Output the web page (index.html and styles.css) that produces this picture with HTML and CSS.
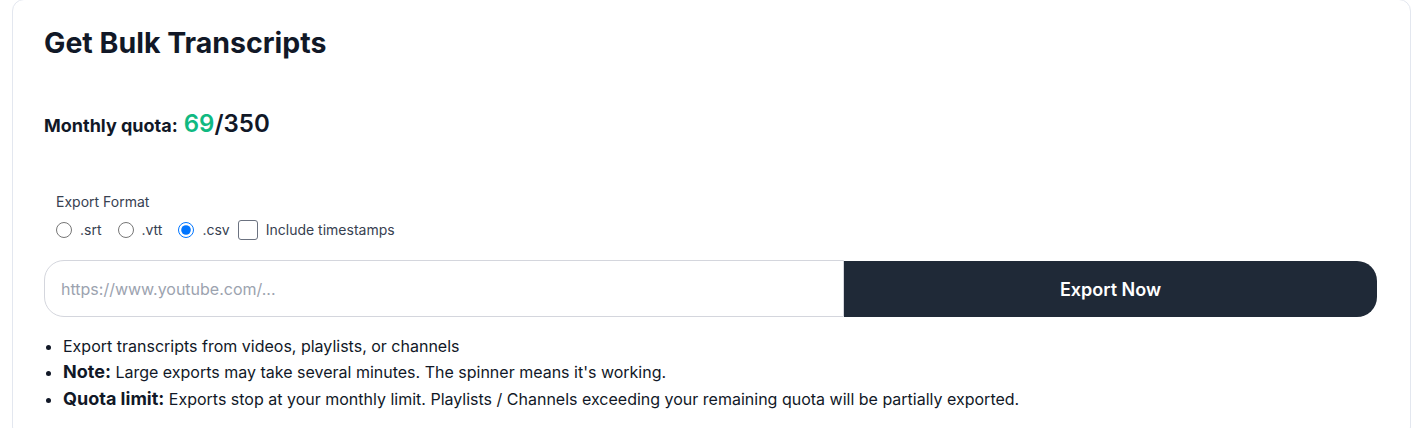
FILE: index.html
```html
<!DOCTYPE html>
<html lang="en">
<head>
<meta charset="utf-8">
<title>Get Bulk Transcripts</title>
<link rel="stylesheet" href="styles.css">
</head>
<body>
<div class="page">
  <section class="card">
    <h2 class="title">Get Bulk Transcripts</h2>
    <div class="quota">
      <span class="quota-label">Monthly quota:</span>
      <span class="quota-value"><span class="used">69</span>/350</span>
    </div>
    <div class="format">
      <div class="format-label">Export Format</div>
      <div class="format-options">
        <label class="opt"><input type="radio" name="fmt" class="radio"><span>.srt</span></label>
        <label class="opt"><input type="radio" name="fmt" class="radio"><span>.vtt</span></label>
        <label class="opt last"><input type="radio" name="fmt" class="radio" checked><span>.csv</span></label>
        <label class="opt"><span class="checkbox"></span><span>Include timestamps</span></label>
      </div>
    </div>
    <div class="export-row">
      <input class="url" type="text" placeholder="https://www.youtube.com/...">
      <button class="export-btn" type="button">Export Now</button>
    </div>
    <ul class="notes">
      <li>Export transcripts from videos, playlists, or channels</li>
      <li><strong>Note:</strong> Large exports may take several minutes. The spinner means it's working.</li>
      <li><strong>Quota limit:</strong> Exports stop at your monthly limit. Playlists / Channels exceeding your remaining quota will be partially exported.</li>
    </ul>
  </section>
</div>
</body>
</html>
```

FILE: styles.css
```css
* { box-sizing: border-box; }
html, body {
  margin: 0;
  padding: 0;
  background: #ffffff;
  font-family: Inter, "Noto Sans", "Liberation Sans", sans-serif;
  color: #111827;
}
.page {
  padding: 0 7px 0 12px;
}
.card {
  margin-top: -1px;
  border: 1px solid #e3e7ef;
  border-radius: 12px;
  background: #fff;
  padding: 25px 33px 24px 31px;
  min-height: 440px;
}
.title {
  margin: 0;
  font-size: 28.5px;
  line-height: 36px;
  font-weight: 700;
  color: #111827;
}
.quota {
  margin-top: 47px;
  display: flex;
  align-items: baseline;
  gap: 6px;
  line-height: 32px;
}
.quota-label {
  font-size: 18px;
  font-weight: 700;
  color: #111827;
}
.quota-value {
  font-size: 24px;
  font-weight: 600;
  color: #111827;
}
.used { color: #10b981; }
.format {
  margin-top: 50px;
  padding: 0 12px;
}
.format-label {
  font-size: 14px;
  line-height: 20px;
  color: #374151;
}
.format-options {
  margin-top: 8px;
  display: flex;
  align-items: center;
  font-size: 14px;
  line-height: 20px;
  color: #374151;
}
.opt {
  display: inline-flex;
  align-items: center;
  gap: 8px;
  margin-right: 16px;
}
.opt.last { margin-right: 8px; }
.radio {
  margin: 0;
  width: 16px;
  height: 16px;
}
.checkbox {
  display: inline-block;
  width: 20px;
  height: 20px;
  border: 1px solid #6b7280;
  border-radius: 3px;
  background: #fff;
}
.export-row {
  margin-top: 20px;
  display: flex;
  height: 57px;
}
.url {
  flex: 0 0 800px;
  min-width: 0;
  border: 1px solid #d4d6dd;
  border-radius: 20px 0 0 20px;
  padding: 0 16px;
  font-family: inherit;
  font-size: 16px;
  color: #111827;
  outline: none;
}
.url::placeholder { color: #9ca3af; }
.export-btn {
  flex: 1 1 auto;
  border: none;
  border-radius: 0 20px 20px 0;
  background: #1f2937;
  color: #ffffff;
  font-family: inherit;
  font-size: 18px;
  font-weight: 600;
  margin: 1px 0 0 0;
  padding: 0;
}
.notes {
  margin: 17px 0 0 0;
  padding-left: 19px;
  font-size: 16px;
  line-height: 1.5;
  color: #111827;
}
.notes strong {
  font-size: 18px;
  font-weight: 700;
}
```
